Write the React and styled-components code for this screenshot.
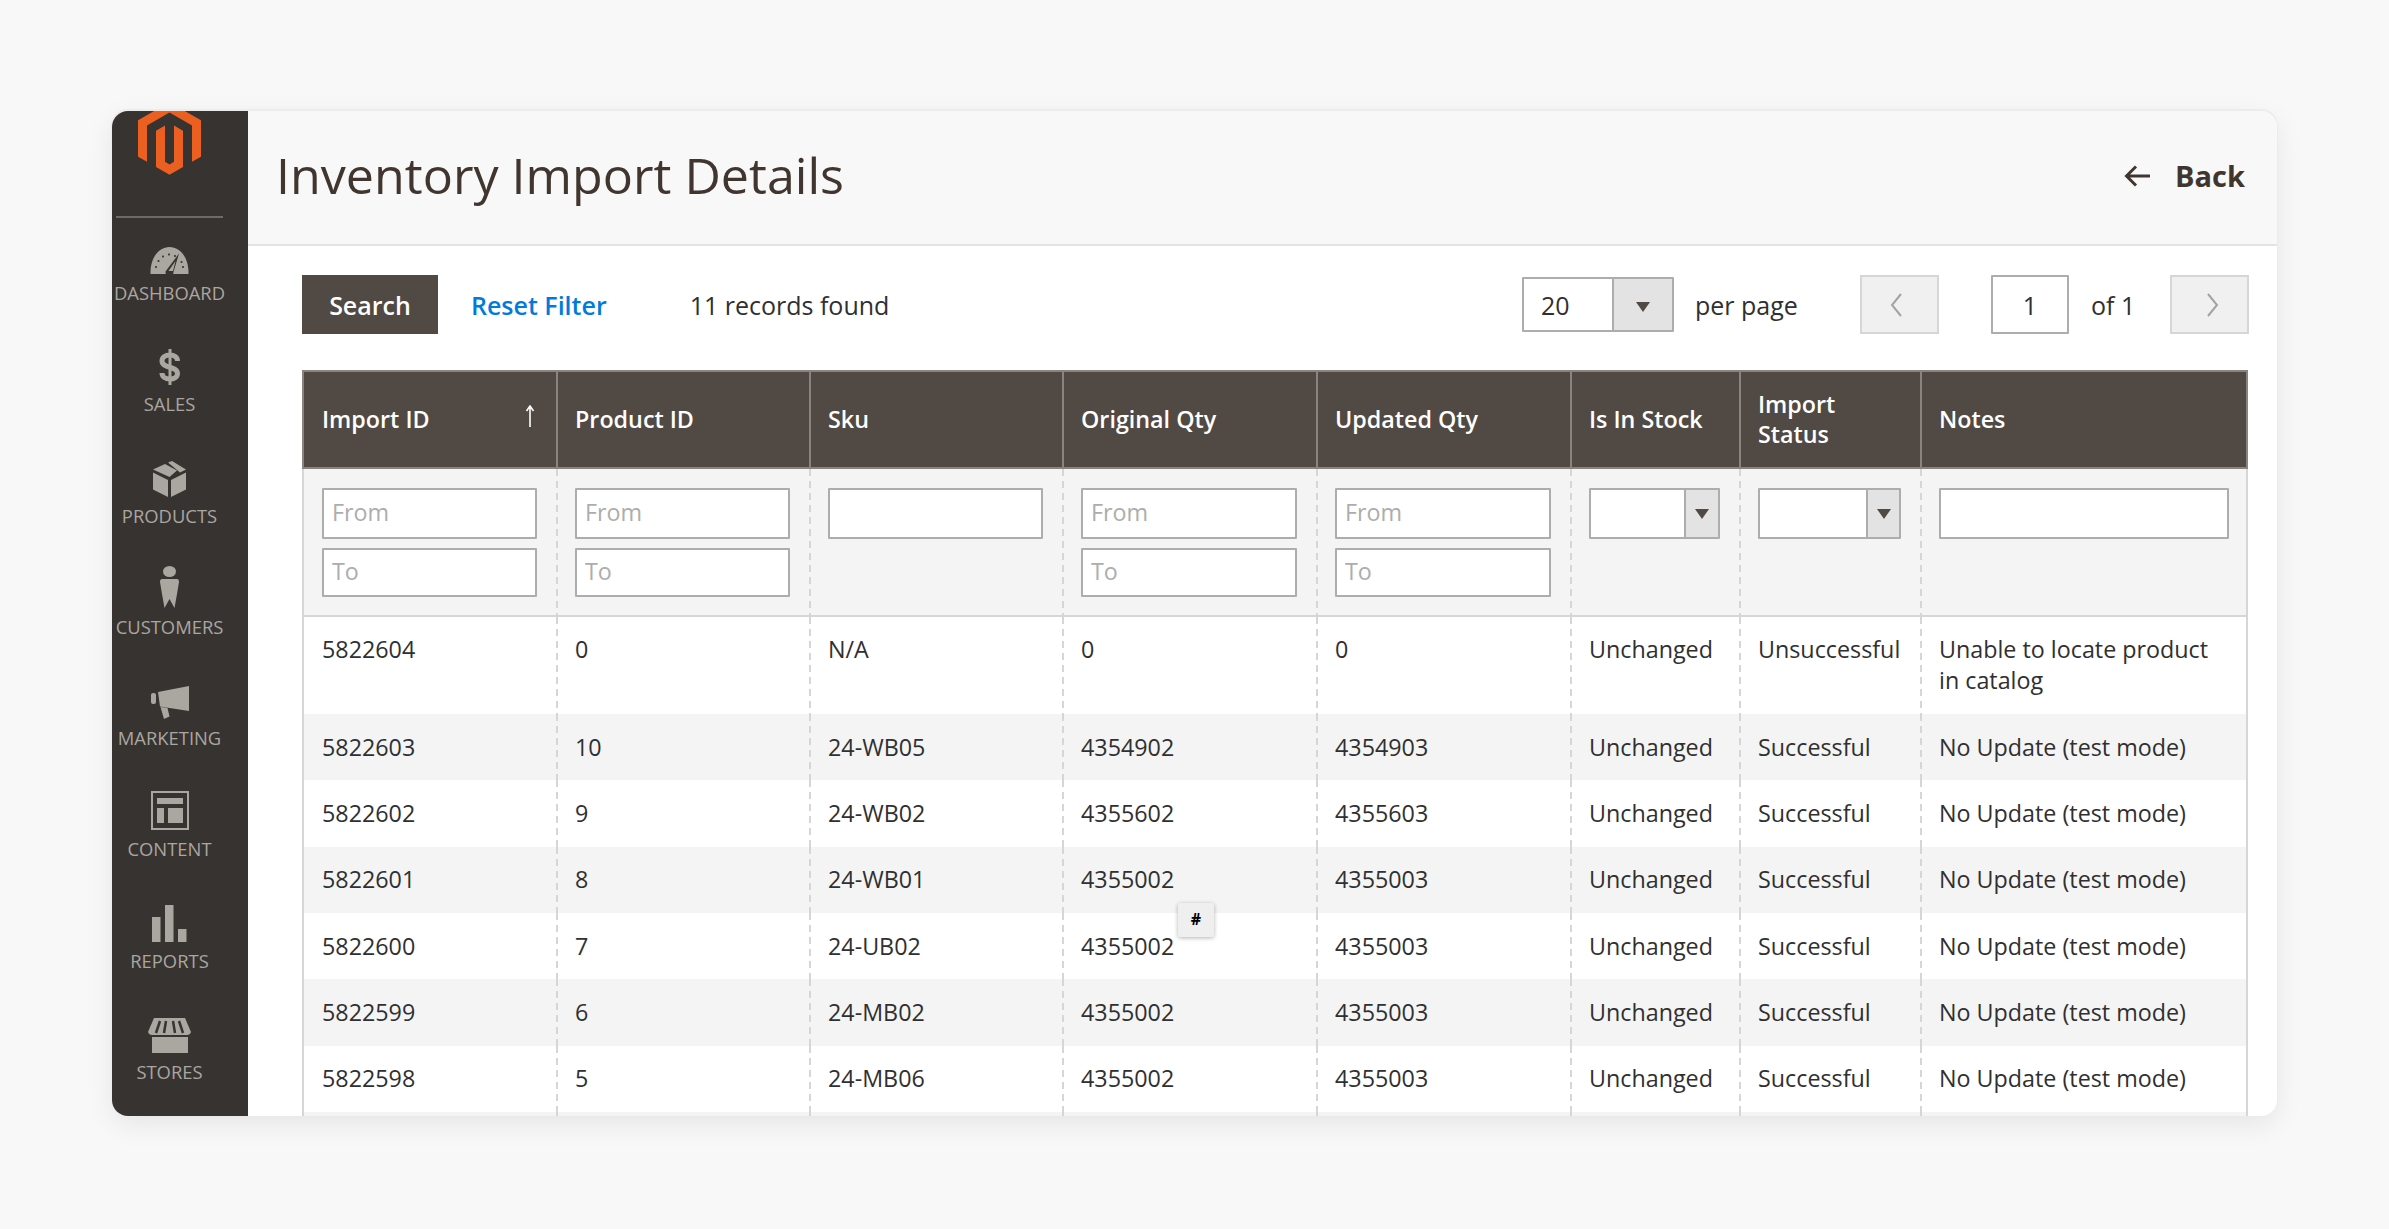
import React from "react";
import styled, { createGlobalStyle } from "styled-components";

const GlobalStyle = createGlobalStyle`
  * {
    box-sizing: border-box;
  }
  html,
  body {
    margin: 0;
    background: #f8f8f8;
    font-family: "Open Sans", "Liberation Sans", sans-serif;
    color: #303030;
  }
`;

const Page = styled.div`
  width: 2389px;
  height: 1229px;
  padding: 111px 0 0 112px;
  overflow: hidden;
`;

const Card = styled.div`
  width: 2165px;
  height: 1005px;
  display: flex;
  background: #fff;
  border-radius: 16px;
  overflow: hidden;
  box-shadow: 0 -1px 0 1px #ececec, 0 8px 28px rgba(0, 0, 0, 0.08);
`;

const Sidebar = styled.nav`
  width: 136px;
  flex-shrink: 0;
  padding-right: 21px;
  background: #373330;
  display: flex;
  flex-direction: column;
  align-items: center;
`;

const Logo = styled.svg`
  width: 63px;
  height: 73px;
  margin-top: -9px;
  flex-shrink: 0;
  fill: #eb5f20;
`;

const SideDivider = styled.div`
  width: 107px;
  height: 2px;
  margin-top: 41px;
  margin-bottom: 12px;
  flex-shrink: 0;
  background: #736963;
`;

const NavItem = styled.a`
  width: 100%;
  height: 111.25px;
  flex-shrink: 0;
  display: flex;
  flex-direction: column;
  align-items: center;
`;

const NavIconBox = styled.div`
  height: 44px;
  display: flex;
  align-items: flex-end;
  fill: #aaa6a0;
`;

const NavLabel = styled.span`
  margin-top: 9px;
  font-size: 18.4px;
  line-height: 20px;
  color: #aaa6a0;
  text-transform: uppercase;
  white-space: nowrap;
`;

const Main = styled.main`
  flex: 1;
  min-width: 0;
  display: flex;
  flex-direction: column;
`;

const Header = styled.header`
  height: 135px;
  flex-shrink: 0;
  display: flex;
  align-items: center;
  justify-content: space-between;
  padding: 0 32px 4px 28px;
  background: #f8f8f8;
  border-bottom: 2px solid #e3e3e3;
`;

const Title = styled.h1`
  margin: 0 0 2px;
  font-size: 50.2px;
  font-weight: 400;
  line-height: 60px;
  color: #41362f;
`;

const BackLink = styled.a`
  display: flex;
  align-items: center;
  gap: 25px;
  font-size: 29px;
  font-weight: 700;
  color: #41362f;
`;

const Toolbar = styled.div`
  height: 59px;
  margin: 29px 28px 36px 54px;
  display: flex;
  align-items: center;
  flex-shrink: 0;
`;

const SearchButton = styled.button`
  width: 136px;
  height: 59px;
  border: 0;
  padding: 0;
  background: #514943;
  color: #fff;
  font-family: inherit;
  font-size: 25px;
  font-weight: 600;
`;

const ResetLink = styled.a`
  margin-left: 33px;
  font-size: 25px;
  font-weight: 600;
  color: #007bdb;
`;

const Records = styled.span`
  margin-left: 83px;
  font-size: 25px;
  color: #303030;
`;

const Pager = styled.div`
  margin-left: auto;
  display: flex;
  align-items: center;
  font-size: 25px;
`;

const SelectBox = styled.div`
  width: ${(p) => p.$width}px;
  height: ${(p) => p.$height}px;
  display: flex;
  align-items: stretch;
  background: #fff;
  border: 2px solid #adadad;
  border-radius: 1px;
`;

const SelectValue = styled.span`
  flex: 1;
  padding-left: 17px;
  display: flex;
  align-items: center;
  font-size: 25px;
`;

const SelectArrow = styled.span`
  width: ${(p) => p.$width}px;
  display: flex;
  align-items: center;
  justify-content: center;
  background: #e3e3e3;
  border-left: 2px solid #adadad;

  &::after {
    content: "";
    margin-top: ${(p) => p.$offset}px;
    border-left: 7px solid transparent;
    border-right: 7px solid transparent;
    border-top: 10px solid #514943;
  }
`;

const PagerText = styled.span`
  width: ${(p) => p.$width}px;
  margin-left: ${(p) => p.$left}px;
  white-space: nowrap;
`;

const PageButton = styled.button`
  width: 79px;
  height: 59px;
  padding: 0 ${(p) => p.$nudgeLeft || 0}px 0 ${(p) => p.$nudgeRight || 0}px;
  margin-left: ${(p) => p.$left}px;
  display: flex;
  align-items: center;
  justify-content: center;
  background: #f0f0f0;
  border: 2px solid #d6d6d6;
  color: #a5a29f;
`;

const PageInput = styled.input`
  width: 78px;
  height: 59px;
  margin-left: 52px;
  padding: 0;
  text-align: center;
  font-family: inherit;
  font-size: 25px;
  color: #303030;
  background: #fff;
  border: 2px solid #adadad;
  border-radius: 1px;
`;

const GridWrap = styled.div`
  width: 1946px;
  margin-left: 54px;
`;

const Grid = styled.table`
  width: 1946px;
  table-layout: fixed;
  border-collapse: separate;
  border-spacing: 0;
`;

const Col = styled.col`
  width: ${(p) => p.$width}px;
`;

const HeadCell = styled.th`
  position: relative;
  height: 99px;
  padding: 0 17px 1px ${(p) => (p.$first ? 18 : 17)}px;
  background: #514943;
  border: 2px solid #8a8380;
  border-right-width: ${(p) => (p.$last ? 2 : 0)}px;
  text-align: left;
  vertical-align: middle;
  font-size: 23.3px;
  font-weight: 600;
  line-height: 30px;
  color: #fff;
`;

const SortArrow = styled.svg`
  position: absolute;
  top: 33px;
  right: 21px;
  width: 10px;
  height: 22px;
  fill: none;
  stroke: #fff;
  stroke-width: 1.6;
`;

const dashes = `
  background-image: repeating-linear-gradient(to bottom, #d6d6d6 0 7px, transparent 7px 12px);
  background-size: 2px 100%;
  background-repeat: no-repeat;
  background-position: left top;
`;

const edges = (p) => `
  ${p.$first ? "border-left: 2px solid #d6d6d6;" : dashes}
  ${p.$last ? "border-right: 2px solid #d6d6d6;" : ""}
`;

const FilterCell = styled.td`
  height: 148px;
  padding: 19px ${(p) => (p.$last ? 17 : 19)}px 0 ${(p) => (p.$first ? 18 : 19)}px;
  vertical-align: top;
  background-color: #f4f4f4;
  border-bottom: 2px solid #d6d6d6;
  ${edges}
`;

const FilterInput = styled.input`
  display: block;
  width: 100%;
  height: ${(p) => p.$height}px;
  margin-bottom: 9px;
  padding: 0 8px 3px;
  font-family: inherit;
  font-size: 23.3px;
  color: #303030;
  background: #fff;
  border: 2px solid #adadad;
  border-radius: 1px;

  &::placeholder {
    color: #adadad;
    opacity: 1;
  }
`;

const Row = styled.tr`
  background: ${(p) => (p.$striped ? "#f4f4f4" : "#fff")};
`;

const Cell = styled.td`
  position: relative;
  height: ${(p) => p.$height}px;
  padding: ${(p) => (p.$tall ? "17px" : "0")} 19px 0 ${(p) => (p.$first ? 18 : 19)}px;
  vertical-align: ${(p) => (p.$tall ? "top" : "middle")};
  font-size: 23.3px;
  line-height: 31px;
  color: #303030;
  ${edges}
`;

const CopyTip = styled.span`
  position: absolute;
  top: -10px;
  left: 116px;
  width: 36px;
  height: 34px;
  display: flex;
  align-items: center;
  justify-content: center;
  background: #f0eff0;
  border-radius: 2px;
  box-shadow: 0 1px 4px rgba(0, 0, 0, 0.3);
  font-size: 16px;
  font-weight: 700;
  color: #000;
`;

const columns = [254, 253, 253, 254, 254, 169, 181, 328];

const heads = ["Import ID", "Product ID", "Sku", "Original Qty", "Updated Qty", "Is In Stock", "Import Status", "Notes"];

const rows = [
  ["5822604", "0", "N/A", "0", "0", "Unchanged", "Unsuccessful", "Unable to locate product in catalog"],
  ["5822603", "10", "24-WB05", "4354902", "4354903", "Unchanged", "Successful", "No Update (test mode)"],
  ["5822602", "9", "24-WB02", "4355602", "4355603", "Unchanged", "Successful", "No Update (test mode)"],
  ["5822601", "8", "24-WB01", "4355002", "4355003", "Unchanged", "Successful", "No Update (test mode)"],
  ["5822600", "7", "24-UB02", "4355002", "4355003", "Unchanged", "Successful", "No Update (test mode)"],
  ["5822599", "6", "24-MB02", "4355002", "4355003", "Unchanged", "Successful", "No Update (test mode)"],
  ["5822598", "5", "24-MB06", "4355002", "4355003", "Unchanged", "Successful", "No Update (test mode)"],
  ["", "", "", "", "", "", "", ""],
];

const filters = [
  { kind: "range" },
  { kind: "range" },
  { kind: "text" },
  { kind: "range" },
  { kind: "range" },
  { kind: "select", arrow: 34 },
  { kind: "select", arrow: 33 },
  { kind: "text" },
];

function DashboardIcon() {
  const ticks = [
    [6, 20],
    [8.5, 14],
    [13, 9.5],
    [19, 7.5],
    [25, 9],
    [33, 20],
    [31.5, 15],
  ];
  return (
    <svg width="39" height="27" viewBox="0 0 39 27">
      <path d="M.5 27C0 12 8 0 19.5 0S39 12 38.5 27z" />
      {ticks.map(([x, y]) => (
        <rect key={x} x={x - 0.9} y={y - 0.9} width="1.8" height="1.8" fill="#373330" />
      ))}
      <path d="M15.5 24.5L29 6.5l-5.5 18.5a4 4 0 0 1-8-.5z" fill="#373330" />
      <path d="M18.5 24l7-10-2.5 10z" />
    </svg>
  );
}

function SalesIcon() {
  return (
    <svg width="22" height="36" viewBox="0 0 22 36">
      <rect x="9.5" width="3" height="36" />
      <path
        d="M18.5 12c0-4-3.500-6-7.500-6-4.500 0-8 2-8 6 0 8 15.500 4.500 15.500 12.500 0 3.500-3.500 5.500-7.500 5.500-4.500 0-8-2-8-6"
        fill="none"
        stroke="#aaa6a0"
        strokeWidth="5"
      />
    </svg>
  );
}

function ProductsIcon() {
  return (
    <svg width="33" height="36" viewBox="0 0 33 36">
      <path d="M0 11.500l15 7.500v17L0 28.500zM18 19l15-7.500v17L18 36z" />
      <path d="M0 8.500l12-5.500 12 6.500-7.500 6.500zM15 1.500L19 0l14 8.500-6 3z" />
    </svg>
  );
}

function CustomersIcon() {
  return (
    <svg width="19" height="42" viewBox="0 0 19 42">
      <ellipse cx="9.5" cy="5.500" rx="6.500" ry="5.500" />
      <path d="M2 13h15q2 0 2 3l-2 12-2.500 14-5-9-5 9L2 28 0 16q0-3 2-3z" />
    </svg>
  );
}

function MarketingIcon() {
  return (
    <svg width="38" height="33" viewBox="0 0 38 33">
      <rect y="7" width="5" height="11" rx="2" />
      <path d="M7 6L38 0v25l-13-2-16-2.500zM9.500 21l7 1 2 8.500L13 33z" />
    </svg>
  );
}

function ContentIcon() {
  return (
    <svg width="38" height="39" viewBox="0 0 38 39">
      <path d="M0 0h38v39H0zm2 2v35h34V2z" fillRule="evenodd" />
      <path d="M6 7h26v6H6zM6 17h7v15H6zM17 17h15v15H17z" />
    </svg>
  );
}

function ReportsIcon() {
  return (
    <svg width="35" height="37" viewBox="0 0 35 37">
      <path d="M0 12h8.500v25H0zM13 0h8.500v37H13zM26 24h8.500v13H26z" />
    </svg>
  );
}

function StoresIcon() {
  return (
    <svg width="43" height="35" viewBox="0 0 43 35">
      <path d="M6 0h31l6 14q-1 3-4 3H4q-3 0-4-3z" />
      <path d="M12 3L8 15M18 3l-2 12M25 3l2 12M31 3l4 12" stroke="#373330" strokeWidth="2.500" fill="none" />
      <path d="M4 19h36v16H4z" />
    </svg>
  );
}

const navItems = [
  ["Dashboard", DashboardIcon],
  ["Sales", SalesIcon],
  ["Products", ProductsIcon],
  ["Customers", CustomersIcon],
  ["Marketing", MarketingIcon],
  ["Content", ContentIcon],
  ["Reports", ReportsIcon],
  ["Stores", StoresIcon],
];

function FilterField({ filter }) {
  if (filter.kind === "select") {
    return (
      <SelectBox $height={51}>
        <SelectValue />
        <SelectArrow $width={filter.arrow} $offset={0} />
      </SelectBox>
    );
  }
  if (filter.kind === "range") {
    return (
      <>
        <FilterInput $height={51} placeholder="From" />
        <FilterInput $height={49} placeholder="To" />
      </>
    );
  }
  return <FilterInput $height={51} />;
}

function App() {
  return (
    <Page>
      <GlobalStyle />
      <Card>
        <Sidebar>
          <Logo viewBox="1.6 0 20.8 24">
            <path d="M12 24l-4.455-2.572v-12l2.970-1.715v12.001l1.485.902 1.485-.902V7.713l2.971 1.715v12L12 24zM22.391 6v12l-2.969 1.714V7.713L12 3.430 4.574 7.713v12L1.609 18V6L12 0l10.391 6z" />
          </Logo>
          <SideDivider />
          {navItems.map(([label, Icon]) => (
            <NavItem key={label}>
              <NavIconBox>
                <Icon />
              </NavIconBox>
              <NavLabel>{label}</NavLabel>
            </NavItem>
          ))}
        </Sidebar>
        <Main>
          <Header>
            <Title>Inventory Import Details</Title>
            <BackLink>
              <svg width="26" height="22" viewBox="0 0 26 22" fill="none" stroke="#41362f" strokeWidth="3">
                <path d="M12 1.500L2.500 11l9.500 9.500M3 11h23" />
              </svg>
              Back
            </BackLink>
          </Header>
          <Toolbar>
            <SearchButton>Search</SearchButton>
            <ResetLink>Reset Filter</ResetLink>
            <Records>11 records found</Records>
            <Pager>
              <SelectBox $width={152} $height={55}>
                <SelectValue>20</SelectValue>
                <SelectArrow $width={60} $offset={4} />
              </SelectBox>
              <PagerText $left={21} $width={101}>
                per page
              </PagerText>
              <PageButton $left={64} $nudgeLeft={7}>
                <svg width="12" height="24" viewBox="0 0 12 24" fill="none" stroke="currentColor" strokeWidth="2">
                  <path d="M11 1L2 12l9 11" />
                </svg>
              </PageButton>
              <PageInput defaultValue="1" />
              <PagerText $left={22} $width={41}>
                of 1
              </PagerText>
              <PageButton $left={38} $nudgeRight={6}>
                <svg width="12" height="24" viewBox="0 0 12 24" fill="none" stroke="currentColor" strokeWidth="2">
                  <path d="M1 1l9 11-9 11" />
                </svg>
              </PageButton>
            </Pager>
          </Toolbar>
          <GridWrap>
            <Grid>
              <colgroup>
                {columns.map((w, i) => (
                  <Col key={i} $width={w} />
                ))}
              </colgroup>
              <thead>
                <tr>
                  {heads.map((h, i) => (
                    <HeadCell key={h} $first={i === 0} $last={i === heads.length - 1}>
                      {h}
                      {i === 0 && (
                        <SortArrow viewBox="0 0 10 22">
                          <path d="M5 22V1M1.500 6L5 1l3.500 5" />
                        </SortArrow>
                      )}
                    </HeadCell>
                  ))}
                </tr>
                <tr>
                  {filters.map((filter, i) => (
                    <FilterCell key={i} $first={i === 0} $last={i === filters.length - 1}>
                      <FilterField filter={filter} />
                    </FilterCell>
                  ))}
                </tr>
              </thead>
              <tbody>
                {rows.map((row, r) => (
                  <Row key={r} $striped={r % 2 === 1}>
                    {row.map((value, c) => (
                      <Cell
                        key={c}
                        $first={c === 0}
                        $last={c === row.length - 1}
                        $tall={r === 0}
                        $height={r === 0 ? 97 : 66.33}
                      >
                        {value}
                        {r === 4 && c === 3 && <CopyTip>#</CopyTip>}
                      </Cell>
                    ))}
                  </Row>
                ))}
              </tbody>
            </Grid>
          </GridWrap>
        </Main>
      </Card>
    </Page>
  );
}

export default App;
